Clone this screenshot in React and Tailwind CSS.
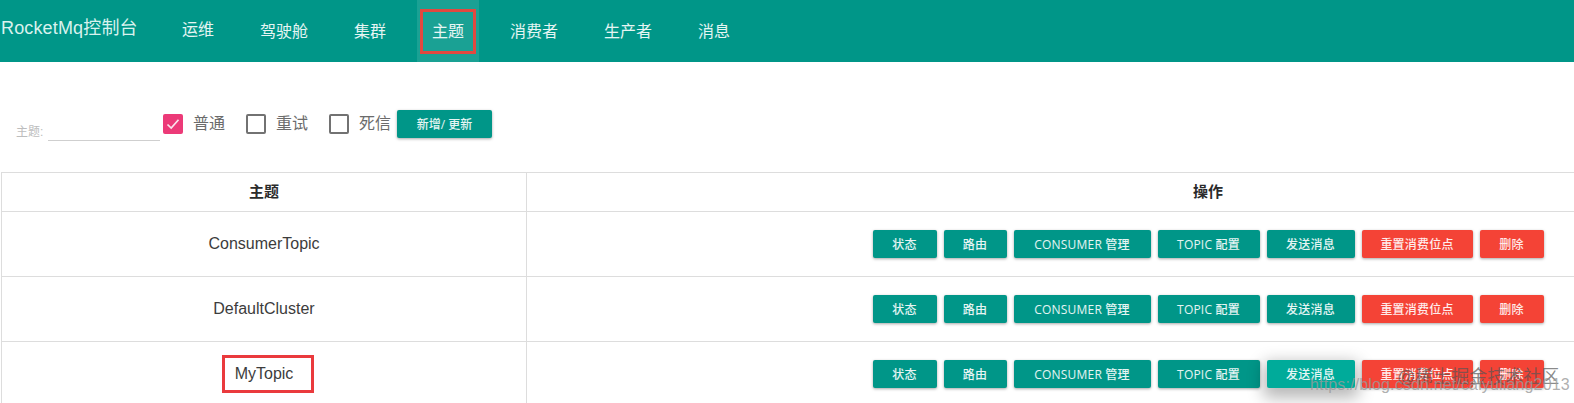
const font = { fontFamily: '"Liberation Sans","Noto Sans CJK SC",sans-serif' };

const NAV = [
  { t: '运维', up: true },
  { t: '驾驶舱' },
  { t: '集群' },
  { t: '主题', active: true },
  { t: '消费者' },
  { t: '生产者' },
  { t: '消息' },
];

const ACTIONS = [
  { t: '状态', w: 'w-[64px]' },
  { t: '路由', w: 'w-[63px]' },
  { t: 'CONSUMER 管理', w: 'w-[137px]' },
  { t: 'TOPIC 配置', w: 'w-[102px]' },
  { t: '发送消息', w: 'w-[88px]', send: true },
  { t: '重置消费位点', w: 'w-[111px]', red: true },
  { t: '删除', w: 'w-[64px]', red: true },
];

function Btn({ a, hover }) {
  const bg = a.red
    ? 'bg-[#f44336]'
    : hover && a.send
      ? 'bg-[#00ab9a] shadow-[0_6px_16px_4px_rgba(0,0,0,0.28)]'
      : 'bg-[#009688]';
  return (
    <div
      className={`${a.w} ${bg} h-[28px] pt-[1px] rounded-[2px] flex items-center justify-center text-[12px] font-medium text-white/90 ${hover && a.send ? '' : 'shadow-[0_1px_3px_rgba(0,0,0,0.35)]'}`}
      style={{ fontFamily: '"Open Sans","Noto Sans CJK SC",sans-serif', letterSpacing: '0.2px' }}
    >
      {a.t}
    </div>
  );
}

function Check({ label, checked }) {
  return (
    <div className="flex items-center">
      {checked ? (
        <div className="w-[20px] h-[20px] rounded-[2px] bg-[#ec3a78] flex items-center justify-center">
          <svg width="16" height="16" viewBox="0 0 16 16" fill="none">
            <path d="M2.5 8.5 L6.2 12 L13.5 3.8" stroke="#fbe4ec" strokeWidth="1.7" />
          </svg>
        </div>
      ) : (
        <div className="w-[20px] h-[20px] rounded-[2px] border-2 border-[#727272]" />
      )}
      <span className="ml-[10px] pt-[1px] text-[16px] text-[#6b6b6b] leading-[20px]">{label}</span>
    </div>
  );
}

function Row({ name, boxed, hover }) {
  return (
    <tr className="h-[65px]">
      <td className="border border-[#dddddd] text-center text-[16px] text-[#3c3c3c] p-0">
        {boxed ? (
          <span className="inline-block relative">
            {name}
            <span className="absolute left-[-13px] top-[-7px] w-[92px] h-[38px] border-[3px] border-[#ea3a3d]" />
          </span>
        ) : (
          name
        )}
      </td>
      <td className="border border-[#dddddd] p-0">
        <div className="flex justify-center gap-[7px]">
          {ACTIONS.map((a) => (
            <Btn key={a.t} a={a} hover={hover} />
          ))}
        </div>
      </td>
    </tr>
  );
}

export default function App() {
  return (
    <div className="w-[1574px] h-[403px] overflow-hidden bg-white relative" style={font}>
      <nav className="h-[62px] bg-[#009688] flex items-stretch">
        <div className="w-[167px] pl-[1px] pt-[16px] text-[18px] leading-[24px] tracking-[0.15px] text-[#d9f2ee] whitespace-nowrap">
          RocketMq控制台
        </div>
        <div className="flex gap-[16px]">
          {NAV.map((n) => (
            <div
              key={n.t}
              className={`relative px-[15px] text-[16px] text-white/90 whitespace-nowrap ${n.up ? 'pt-[18px]' : 'pt-[20px]'} ${n.active ? 'bg-white/10' : ''}`}
            >
              {n.t}
              {n.active && (
                <span className="absolute left-[3px] top-[9px] w-[56px] h-[45px] border-[3px] border-[#e2483f]" />
              )}
            </div>
          ))}
        </div>
      </nav>

      <div className="h-[110px] pl-[16px] pt-[47px] flex items-start">
        <div className="flex items-end h-[32px]">
          <span className="text-[12px] text-[#bdbdbd] leading-[16px] w-[32px] mb-[1px]">主题:</span>
          <div className="w-[112px] border-b border-[#cfcfcf] h-[20px]" />
        </div>
        <div className="ml-[3px] mt-[4px] flex gap-[21px]">
          <Check label="普通" checked />
          <Check label="重试" />
        </div>
        <div className="ml-[21px] mt-[4px]">
          <Check label="死信" />
        </div>
        <div
          className="ml-[6px] mt-[1px] w-[95px] h-[28px] pt-[1px] rounded-[2px] bg-[#009688] text-white/90 text-[12px] font-medium flex items-center justify-center shadow-[0_1px_3px_rgba(0,0,0,0.35)]"
          style={{ fontFamily: '"Open Sans","Noto Sans CJK SC",sans-serif' }}
        >
          新增/ 更新
        </div>
      </div>

      <table className="ml-[1px] w-[1889px] table-fixed border-collapse">
        <colgroup>
          <col className="w-[525px]" />
          <col />
        </colgroup>
        <thead>
          <tr className="h-[39px]">
            <th className="border border-[#dddddd] text-center text-[15px] font-bold text-[#2b2b2b] p-0">主题</th>
            <th className="border border-[#dddddd] text-center text-[15px] font-bold text-[#2b2b2b] p-0">操作</th>
          </tr>
        </thead>
        <tbody>
          <Row name="ConsumerTopic" />
          <Row name="DefaultCluster" />
          <Row name="MyTopic" boxed hover />
        </tbody>
      </table>

      <div className="absolute left-[1397px] top-[367px] text-[18px] leading-[20px] text-[#555555]/70 whitespace-nowrap">
        @稀土掘金技术社区
      </div>
      <div className="absolute left-[1310px] top-[375px] text-[16px] leading-[20px] tracking-[0.15px] text-[#9a9a9a]/80 whitespace-nowrap">
        https://blog.csdn.net/caiyuliang2013
      </div>
    </div>
  );
}
